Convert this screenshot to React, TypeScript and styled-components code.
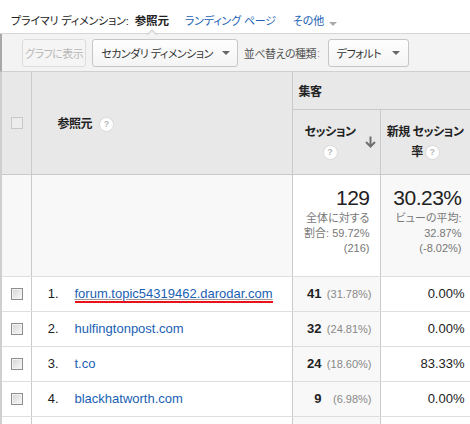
import React from "react";
import styled, { createGlobalStyle } from "styled-components";

type Row = {
  rank: number;
  source: string;
  sessions: number;
  share: string;
  newRate: string;
  flagged?: boolean;
};

const rows: Row[] = [
  { rank: 1, source: "forum.topic54319462.darodar.com", sessions: 41, share: "(31.78%)", newRate: "0.00%", flagged: true },
  { rank: 2, source: "hulfingtonpost.com", sessions: 32, share: "(24.81%)", newRate: "0.00%" },
  { rank: 3, source: "t.co", sessions: 24, share: "(18.60%)", newRate: "83.33%" },
  { rank: 4, source: "blackhatworth.com", sessions: 9, share: "(6.98%)", newRate: "0.00%" },
];

const GlobalStyle = createGlobalStyle`
  html, body {
    margin: 0;
    background: #fff;
    font-family: "Liberation Sans", "Noto Sans CJK JP", sans-serif;
    font-feature-settings: "palt";
    color: #222;
  }
`;

const Page = styled.div`
  width: 470px;
  height: 424px;
  overflow: hidden;
`;

const DimensionBar = styled.div`
  height: 34px;
  box-sizing: border-box;
  padding: 14px 0 0 11px;
  display: flex;
  align-items: flex-start;
  font-size: 11px;
  line-height: 14px;
  letter-spacing: -0.15px;
  border-bottom: 1px solid #d6d6d6;
`;

const DimLabel = styled.span`
  color: #222;
  margin-right: 6px;
`;

const DimActive = styled.span`
  position: relative;
  font-weight: bold;
  font-size: 11.5px;
  color: #222;
  margin-right: 16px;

  &::before,
  &::after {
    content: "";
    position: absolute;
    left: 50%;
    width: 0;
    height: 0;
    border-style: solid;
    border-color: transparent;
  }
  &::before {
    bottom: -7px;
    margin-left: -6px;
    border-width: 0 6px 6px 6px;
    border-bottom-color: #d6d6d6;
  }
  &::after {
    bottom: -8px;
    margin-left: -5px;
    border-width: 0 5px 5px 5px;
    border-bottom-color: #f3f3f3;
  }
`;

const DimLink = styled.span<{ $more?: boolean }>`
  color: #1a5fb4;
  margin-right: ${(p) => (p.$more ? "5px" : "17px")};
`;

const Caret = styled.span<{ $color?: string }>`
  display: inline-block;
  width: 0;
  height: 0;
  border-left: 4px solid transparent;
  border-right: 4px solid transparent;
  border-top: 4px solid ${(p) => p.$color || "#aaa"};
  align-self: center;
`;

const Toolbar = styled.div`
  height: 38px;
  box-sizing: border-box;
  padding: 5px 0 0 20px;
  display: flex;
  align-items: flex-start;
  gap: 6px;
  background: #f3f3f3;
  border-left: 2px solid #a8a8a8;
  border-bottom: 1px solid #d0d0d0;
  letter-spacing: -0.5px;
`;

const Button = styled.div<{ $disabled?: boolean; $wide?: boolean }>`
  height: 28px;
  box-sizing: border-box;
  display: flex;
  align-items: center;
  gap: ${(p) => (p.$wide ? "11px" : "9px")};
  padding: 0 7px 0 ${(p) => (p.$disabled ? "2px" : "8px")};
  padding-right: ${(p) => (p.$disabled ? "2px" : p.$wide ? "8px" : "7px")};
  font-size: 11px;
  border: 1px solid ${(p) => (p.$disabled ? "#dcdcdc" : "#c6c6c6")};
  border-radius: 3px;
  background: ${(p) => (p.$disabled ? "#f5f5f5" : "linear-gradient(#fefefe, #f4f4f4)")};
  color: ${(p) => (p.$disabled ? "#b8b8b8" : "#333")};
`;

const SortLabel = styled.span`
  height: 28px;
  display: flex;
  align-items: center;
  font-size: 11px;
  color: #555;
  margin-right: 2px;
`;

const Colon = styled.span`
  color: #b48aa8;
  margin-left: 1px;
`;

const TableWrap = styled.div`
  border-left: 2px solid #cfcfcf;
`;

const Table = styled.table`
  border-collapse: collapse;
  table-layout: fixed;
  width: 468px;
`;

const HeadCell = styled.th<{ $align?: string }>`
  background: #e8e8e8;
  border-right: 1px solid #cacaca;
  border-bottom: 1px solid #cacaca;
  font-size: 12px;
  font-weight: bold;
  letter-spacing: -0.5px;
  color: #222;
  text-align: ${(p) => p.$align || "left"};
  vertical-align: middle;
  padding: 0;
  line-height: 20px;
`;

const Cell = styled.td<{ $bg?: string; $align?: string; $top?: boolean }>`
  background: ${(p) => p.$bg || "#fff"};
  border-right: 1px solid #cacaca;
  border-bottom: 1px solid #dedede;
  text-align: ${(p) => p.$align || "left"};
  vertical-align: ${(p) => (p.$top ? "top" : "middle")};
  padding: 0;
  font-size: 13px;
`;

const Check = styled.span<{ $plain?: boolean }>`
  display: block;
  margin-left: 9px;
  width: 12px;
  height: 12px;
  box-sizing: border-box;
  border: 1px solid ${(p) => (p.$plain ? "#c8c8c8" : "#8e8e8e")};
  background: ${(p) => (p.$plain ? "#ececec" : "linear-gradient(135deg, #d4d4d4, #fafafa)")};
  box-shadow: ${(p) => (p.$plain ? "none" : "inset 0 0 0 1px #f2f2f2")};
`;

const Help = styled.span`
  display: inline-flex;
  align-items: center;
  justify-content: center;
  width: 13px;
  height: 13px;
  border-radius: 50%;
  background: #fff;
  box-shadow: 0 0 0 1px #dddddd;
  color: #b8b8b8;
  font-size: 9px;
  font-weight: bold;
  letter-spacing: 0;
  line-height: 13px;
  vertical-align: middle;
`;

const SourceHead = styled.div`
  display: flex;
  align-items: center;
  gap: 8px;
  padding-left: 26px;
  padding-top: 3px;
`;

const SessionsHead = styled.div`
  display: flex;
  align-items: center;
  padding: 0 4px 0 0;
`;

const HeadStack = styled.div`
  flex: 1;
  text-align: center;
  padding-left: 3px;
`;

const Group = styled.div`
  padding-left: 6px;
  padding-top: 3px;
`;

const Big = styled.div`
  font-size: 21px;
  letter-spacing: -0.5px;
  line-height: 26px;
  color: #222;
  margin-top: 10px;
`;

const Small = styled.div`
  font-size: 11px;
  line-height: 15px;
  color: #777;
`;

const TotalBox = styled.div<{ $pad: number }>`
  padding-right: ${(p) => p.$pad}px;
`;

const Rank = styled.span`
  display: inline-block;
  width: 27px;
  text-align: right;
  margin-right: 16px;
  color: #222;
`;

const SourceLink = styled.span<{ $flagged?: boolean }>`
  color: #1a5fb4;
  text-decoration: ${(p) => (p.$flagged ? "underline" : "none")};
  text-decoration-color: #9a9a9a;
  text-underline-offset: 1px;
  border-bottom: ${(p) => (p.$flagged ? "2px solid #e8121a" : "none")};
`;

const Count = styled.span`
  font-weight: bold;
  color: #222;
`;

const Share = styled.span`
  display: inline-block;
  width: 50px;
  text-align: right;
  font-size: 11px;
  color: #888;
`;

const SortArrow = () => (
  <svg width="11" height="12" viewBox="0 0 11 12">
    <path d="M5.5 0.5v10M1 6l4.5 4.5L10 6" stroke="#707070" strokeWidth="2" fill="none" />
  </svg>
);

export default function App() {
  return (
    <Page>
      <GlobalStyle />
      <DimensionBar>
        <DimLabel>プライマリ ディメンション:</DimLabel>
        <DimActive>参照元</DimActive>
        <DimLink>ランディング ページ</DimLink>
        <DimLink $more>その他</DimLink>
        <Caret $color="#aaa" />
      </DimensionBar>
      <Toolbar>
        <Button $disabled>グラフに表示</Button>
        <Button>
          セカンダリ ディメンション
          <Caret $color="#666" />
        </Button>
        <SortLabel>
          並べ替えの種類<Colon>:</Colon>
        </SortLabel>
        <Button $wide>
          デフォルト
          <Caret $color="#666" />
        </Button>
      </Toolbar>
      <TableWrap>
        <Table>
          <colgroup>
            <col style={{ width: 29 }} />
            <col style={{ width: 261 }} />
            <col style={{ width: 88 }} />
            <col style={{ width: 90 }} />
          </colgroup>
          <thead>
            <tr style={{ height: 37 }}>
              <HeadCell rowSpan={2}>
                <Check $plain />
              </HeadCell>
              <HeadCell rowSpan={2}>
                <SourceHead>
                  参照元 <Help>?</Help>
                </SourceHead>
              </HeadCell>
              <HeadCell colSpan={2}>
                <Group>集客</Group>
              </HeadCell>
            </tr>
            <tr style={{ height: 65 }}>
              <HeadCell>
                <SessionsHead>
                  <HeadStack>
                    セッション
                    <br />
                    <Help>?</Help>
                  </HeadStack>
                  <SortArrow />
                </SessionsHead>
              </HeadCell>
              <HeadCell $align="center">
                新規 セッション
                <br />率 <Help>?</Help>
              </HeadCell>
            </tr>
          </thead>
          <tbody>
            <tr style={{ height: 102 }}>
              <Cell $bg="#f8f8f8" />
              <Cell $bg="#f8f8f8" />
              <Cell $bg="#fff" $align="right" $top>
                <TotalBox $pad={10}>
                  <Big>129</Big>
                  <Small>全体に対する</Small>
                  <Small>割合: 59.72%</Small>
                  <Small>(216)</Small>
                </TotalBox>
              </Cell>
              <Cell $bg="#f8f8f8" $align="right" $top>
                <TotalBox $pad={8}>
                  <Big>30.23%</Big>
                  <Small>ビューの平均:</Small>
                  <Small>32.87%</Small>
                  <Small>(-8.02%)</Small>
                </TotalBox>
              </Cell>
            </tr>
            {rows.map((r) => (
              <tr key={r.rank} style={{ height: 35 }}>
                <Cell>
                  <Check />
                </Cell>
                <Cell>
                  <Rank>{r.rank}.</Rank>
                  <SourceLink $flagged={r.flagged}>{r.source}</SourceLink>
                </Cell>
                <Cell $bg="#f8f8f8" $align="right">
                  <TotalBox $pad={8}>
                    <Count>{r.sessions}</Count>
                    <Share>{r.share}</Share>
                  </TotalBox>
                </Cell>
                <Cell $align="right">
                  <TotalBox $pad={5}>{r.newRate}</TotalBox>
                </Cell>
              </tr>
            ))}
            <tr style={{ height: 35 }}>
              <Cell />
              <Cell />
              <Cell $bg="#f8f8f8" />
              <Cell />
            </tr>
          </tbody>
        </Table>
      </TableWrap>
    </Page>
  );
}
